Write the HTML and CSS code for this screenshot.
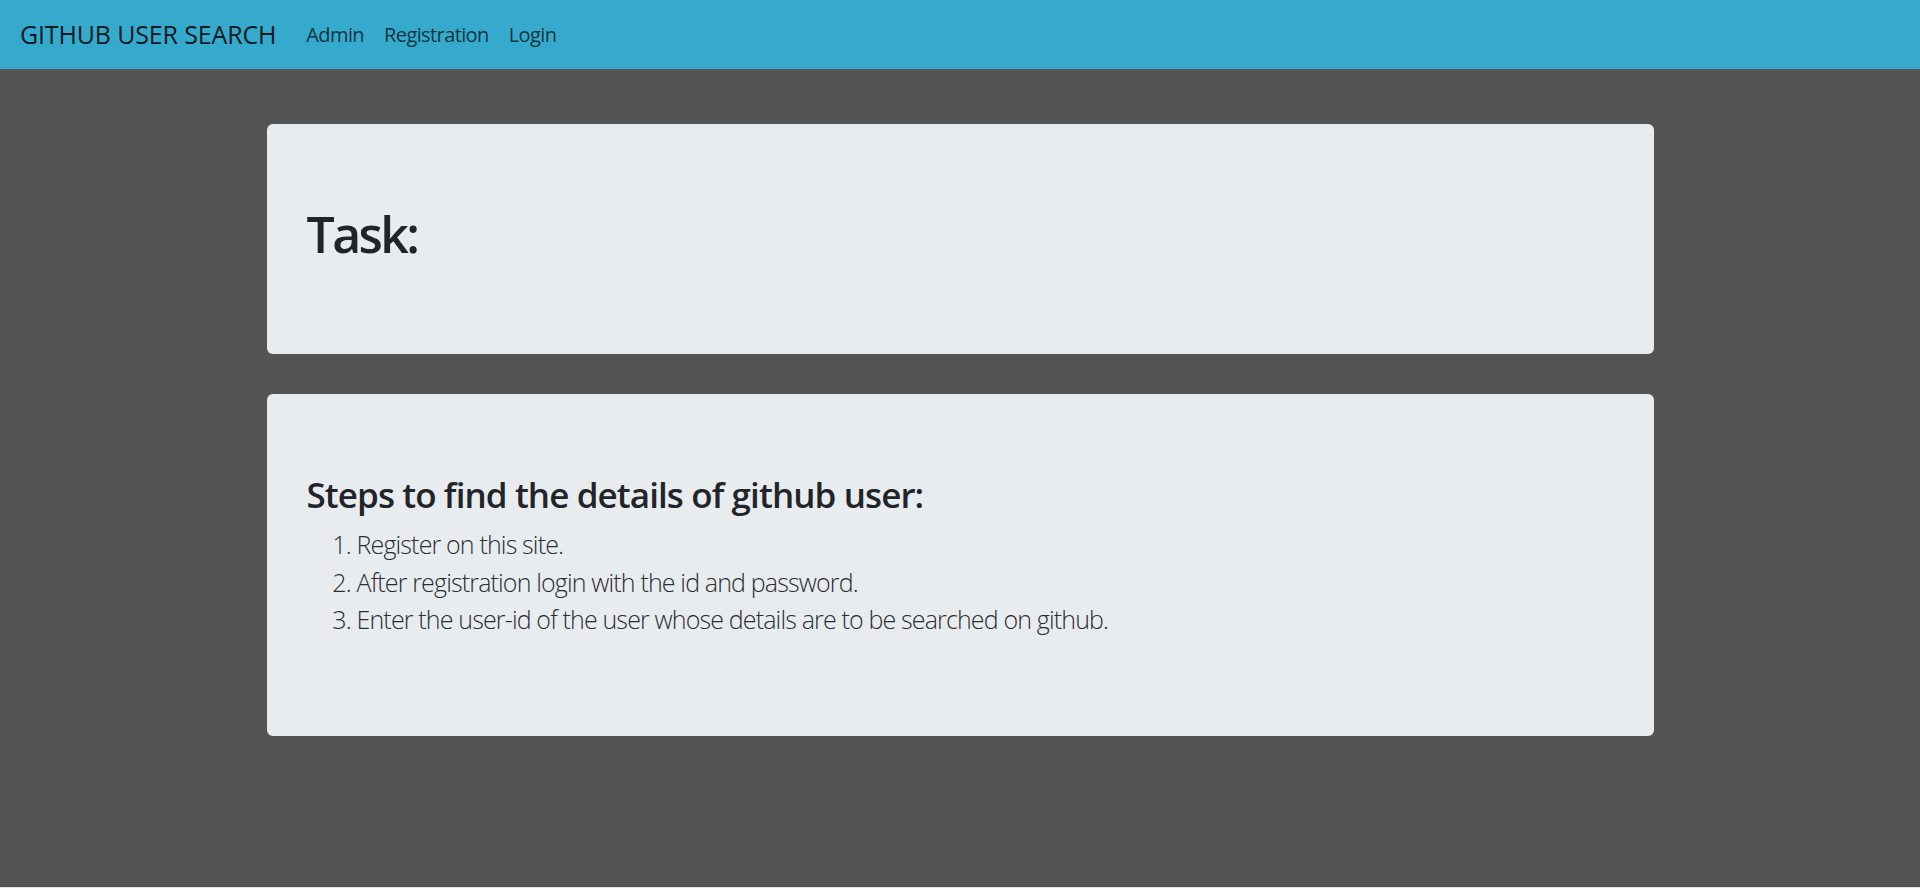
FILE: index.html
```html
<!DOCTYPE html>
<html lang="en">
<head>
<meta charset="utf-8">
<title>Github User Search</title>
<link rel="stylesheet" href="styles.css">
</head>
<body>
<div class="page">
  <nav class="navbar">
    <a class="brand" href="#">GITHUB USER SEARCH</a>
    <ul class="nav">
      <li><a class="nav-link" href="#">Admin</a></li>
      <li><a class="nav-link" href="#">Registration</a></li>
      <li><a class="nav-link" href="#">Login</a></li>
    </ul>
  </nav>
  <main class="container">
    <section class="jumbotron">
      <h1 class="title">Task:</h1>
    </section>
    <section class="jumbotron">
      <h3 class="subtitle">Steps to find the details of github user:</h3>
      <ol class="lead">
        <li>Register on this site.</li>
        <li>After registration login with the id and password.</li>
        <li>Enter the user-id of the user whose details are to be searched on github.</li>
      </ol>
    </section>
  </main>
</div>
</body>
</html>
```
FILE: styles.css
```css
* { box-sizing: border-box; }
html, body { margin: 0; padding: 0; }
body {
  background: #e2e2e2;
  font-family: "Open Sans", "Noto Sans", sans-serif;
  color: #212529;
}
.page {
  background: #545454;
  height: 887px;
}
.navbar {
  background: #36aacd;
  height: 69px;
  padding: 0 20px;
  display: flex;
  align-items: center;
}
.brand {
  font-size: 25px;
  color: #0d1a22;
  text-decoration: none;
  margin-right: 20px;
  line-height: 37px;
  letter-spacing: -0.15px;
}
.nav {
  display: flex;
  list-style: none;
  margin: 0;
  padding: 0;
}
.nav-link {
  display: block;
  padding: 10px;
  font-size: 20px;
  color: rgba(0, 0, 0, 0.72);
  text-decoration: none;
  letter-spacing: -0.6px;
}
.container {
  width: 1387px;
  margin: 0 auto;
  padding-top: 55px;
}
.jumbotron {
  background: #e9ecef;
  border-radius: 6px;
  padding: 80px 40px;
  margin-bottom: 40px;
}
.title {
  font-size: 50px;
  font-weight: 600;
  line-height: 60px;
  margin: 0 0 10px;
  letter-spacing: -2.6px;
}
.subtitle {
  font-size: 35px;
  font-weight: 600;
  line-height: 42px;
  margin: 0 0 10px;
  letter-spacing: -0.9px;
}
.lead {
  font-size: 25px;
  font-weight: 300;
  line-height: 37.5px;
  margin: 0 0 17px;
  padding-left: 50px;
  letter-spacing: -0.85px;
  color: #2a2e33;
}
```
